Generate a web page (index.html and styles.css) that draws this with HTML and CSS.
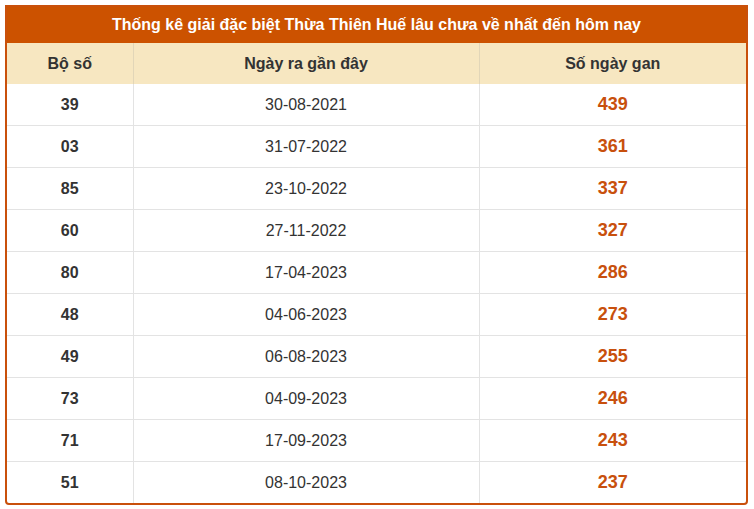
FILE: index.html
```html
<!DOCTYPE html>
<html lang="vi">
<head>
<meta charset="utf-8">
<title>Thống kê giải đặc biệt</title>
<link rel="stylesheet" href="styles.css">
</head>
<body>
<div class="card">
  <div class="title">Thống kê giải đặc biệt Thừa Thiên Huế lâu chưa về nhất đến hôm nay</div>
  <table class="stats">
    <colgroup><col class="c1"><col class="c2"><col class="c3"></colgroup>
    <thead>
      <tr><th>Bộ số</th><th>Ngày ra gần đây</th><th>Số ngày gan</th></tr>
    </thead>
    <tbody>
      <tr><td class="num">39</td><td>30-08-2021</td><td class="gan">439</td></tr>
      <tr><td class="num">03</td><td>31-07-2022</td><td class="gan">361</td></tr>
      <tr><td class="num">85</td><td>23-10-2022</td><td class="gan">337</td></tr>
      <tr><td class="num">60</td><td>27-11-2022</td><td class="gan">327</td></tr>
      <tr><td class="num">80</td><td>17-04-2023</td><td class="gan">286</td></tr>
      <tr><td class="num">48</td><td>04-06-2023</td><td class="gan">273</td></tr>
      <tr><td class="num">49</td><td>06-08-2023</td><td class="gan">255</td></tr>
      <tr><td class="num">73</td><td>04-09-2023</td><td class="gan">246</td></tr>
      <tr><td class="num">71</td><td>17-09-2023</td><td class="gan">243</td></tr>
      <tr><td class="num">51</td><td>08-10-2023</td><td class="gan">237</td></tr>
    </tbody>
  </table>
</div>
</body>
</html>
```

FILE: styles.css
```css
html, body {
  margin: 0;
  padding: 0;
  background: #ffffff;
}
body {
  padding: 5px 0 0 5px;
  font-family: "Liberation Sans", Arial, sans-serif;
  color: #333333;
}
.card {
  width: 739px;
  border: 2px solid #c9500b;
  border-radius: 0 0 4px 4px;
  overflow: hidden;
}
.title {
  background: #cc5200;
  color: #ffffff;
  font-weight: bold;
  font-size: 16px;
  text-align: center;
  height: 36px;
  line-height: 36px;
}
.stats {
  width: 100%;
  border-collapse: collapse;
  table-layout: fixed;
}
.c1 { width: 126px; }
.c2 { width: 346px; }
.c3 { width: auto; }
.stats th {
  background: #f7e7c1;
  font-weight: bold;
  font-size: 16px;
  height: 41px;
  padding: 0;
  color: #333333;
  border-left: 1px solid #e2d6b8;
}
.stats th:first-child, .stats td:first-child { border-left: none; }
.stats td {
  height: 41px;
  padding: 0;
  text-align: center;
  font-size: 16px;
  border-top: 1px solid #e3e3e3;
  border-left: 1px solid #e3e3e3;
}
.stats tbody tr:first-child td { border-top: none; }
.stats td.num { font-weight: bold; }
.stats td.gan {
  font-weight: bold;
  font-size: 18px;
  color: #c8500d;
}
```
